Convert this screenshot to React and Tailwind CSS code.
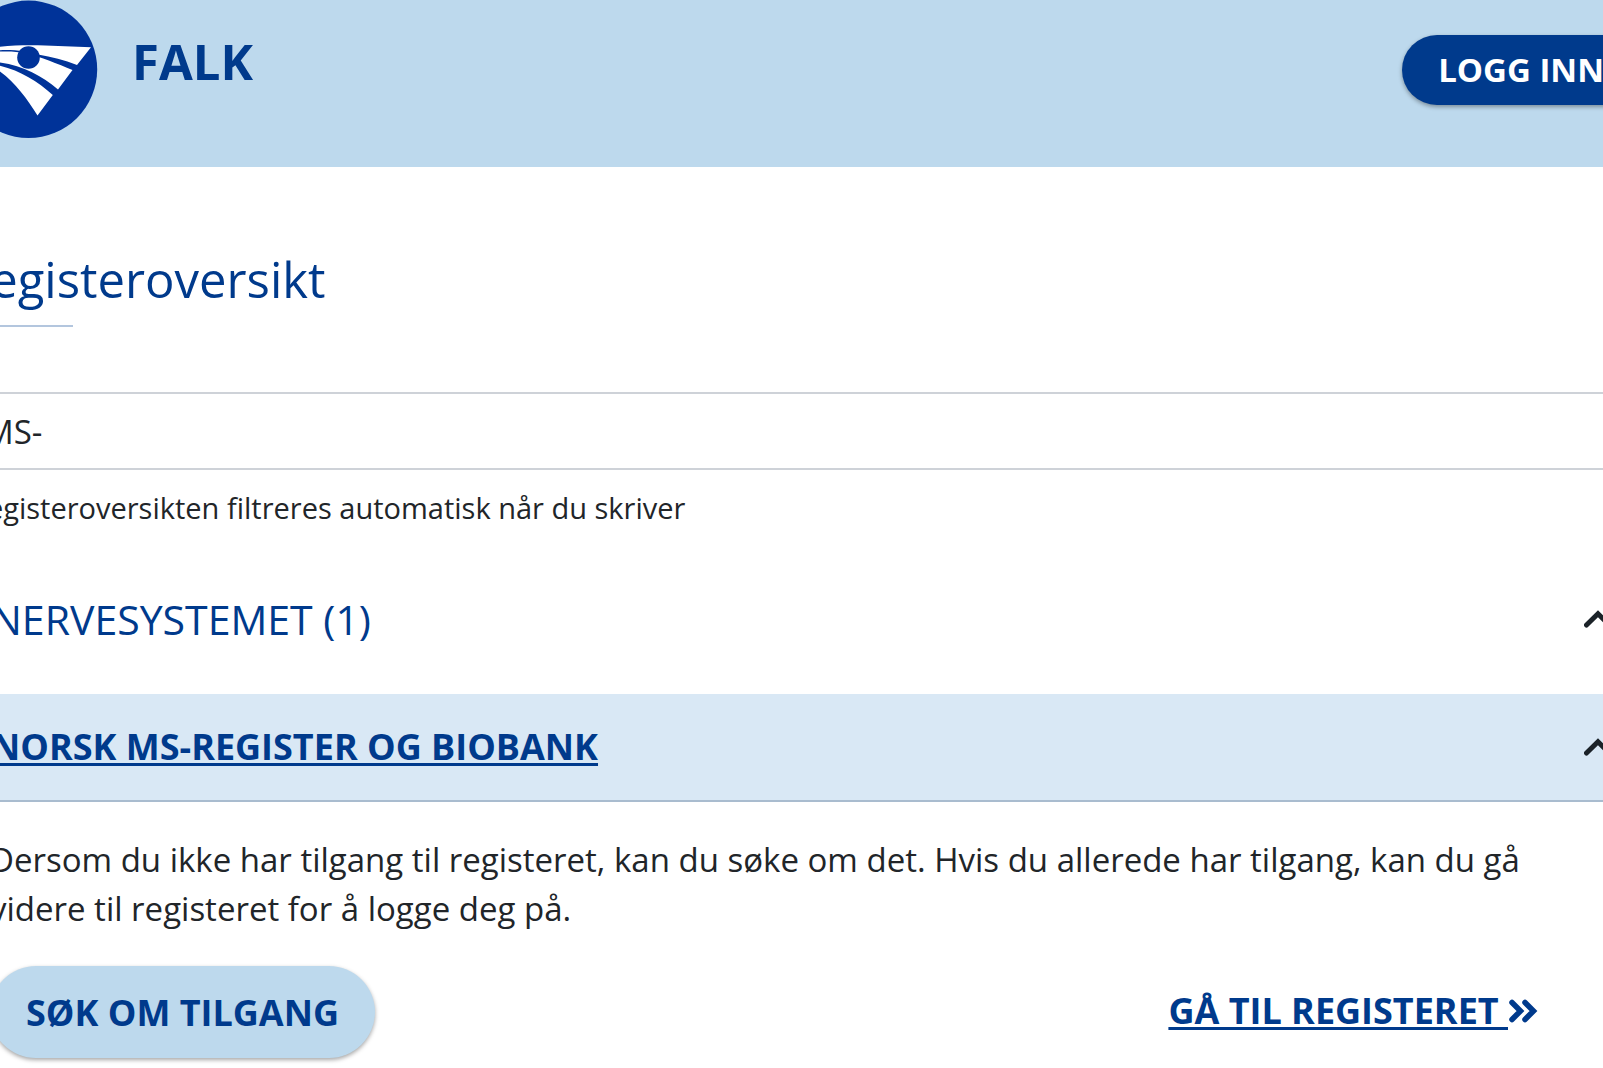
import React, { useState } from 'react'

// Round FALK mark: dark disc with a stylised falcon wing
function FalkLogo() {
  return (
    <svg viewBox="-40 0 138 138" className="size-[138px] shrink-0" aria-hidden="true">
      <circle cx="28.5" cy="69.3" r="68.7" fill="#003399" />
      <path d="M-34 54 C-10 46 18 44.5 45 45.5 L91 47.3 L77 65 C64 60 52 57 38 54.5 C22 49.5 0 48 -34 54 Z" fill="#fff" />
      <path d="M-34 57 C-10 50.5 12 50.5 24 53 C40 56.5 58 64 72.5 70 L58 89.5 C42 76 24 66 0 62.5 C-12 60.5 -22 60 -34 60 Z" fill="#fff" />
      <path d="M-28 62.5 C8 63 31 76 52.8 95 L37.5 115.5 C27 99 16 83 0 71.5 C-9 66 -18 63.5 -28 62.5 Z" fill="#fff" />
      <circle cx="28.5" cy="57.5" r="11.3" fill="#003399" />
    </svg>
  )
}

function ChevronUp() {
  return (
    <svg viewBox="0 0 28 18" className="h-[18px] w-7 shrink-0" fill="none" aria-hidden="true">
      <path d="M2.5 15 L14 3.8 L25.5 15" stroke="#1b2228" strokeWidth="5" strokeLinecap="round" strokeLinejoin="miter" />
    </svg>
  )
}

function DoubleChevronRight() {
  return (
    <svg viewBox="0 0 30 24" className="h-6 w-[30px] shrink-0" fill="none" aria-hidden="true">
      <path d="M4 3.5 L12.5 12 L4 20.5 M17 3.5 L25.5 12 L17 20.5" stroke="#003a8c" strokeWidth="5.5" strokeLinecap="round" strokeLinejoin="miter" />
    </svg>
  )
}

const REGISTERS = [{ id: 'ms', name: 'NORSK MS-REGISTER OG BIOBANK' }]

function RegisterItem({ register }) {
  const [open, setOpen] = useState(true)

  return (
    <section>
      <h3>
        <button
          type="button"
          aria-expanded={open}
          onClick={() => setOpen(!open)}
          className="flex h-[108px] w-full items-center justify-between border-b-2 border-[#a9bccf] bg-[#d9e8f5] px-px text-left text-4xl font-bold text-[#003a8c]"
        >
          <span className="underline decoration-[3px] underline-offset-3">{register.name}</span>
          <ChevronUp />
        </button>
      </h3>
      {open && (
        <div className="pt-[33px]">
          <p className="pr-16 text-[33px] leading-[49px] text-[#212529]">
            Dersom du ikke har tilgang til registeret, kan du søke om det. Hvis du allerede har tilgang, kan du gå
            videre til registeret for å logge deg på.
          </p>
          <div className="mt-[33px] flex items-center justify-between pr-[75px]">
            <button
              type="button"
              className="h-[92px] rounded-full bg-[#bdd9ed] px-9 pt-0.5 text-4xl font-bold text-[#003a8c] shadow-[0_2px_4px_rgba(0,0,0,0.35)]"
            >
              SØK OM TILGANG
            </button>
            <a href="#register" className="flex items-center pb-0.5 text-4xl font-bold text-[#003a8c]">
              <span className="whitespace-pre underline decoration-[3px] underline-offset-3">{'GÅ TIL REGISTERET '}</span>
              <DoubleChevronRight />
            </a>
          </div>
        </div>
      )}
    </section>
  )
}

function App() {
  const [query, setQuery] = useState('MS-')
  const [groupOpen, setGroupOpen] = useState(true)

  return (
    <div className="min-h-screen overflow-hidden bg-white font-['Open_Sans',sans-serif]">
      <header className="-mx-10 flex h-[167px] items-start justify-between bg-[#bdd9ed] pr-[3px]">
        <div className="flex items-start gap-[34px]">
          <FalkLogo />
          <span className="pt-[26px] text-[49px] leading-[70px] font-bold text-[#003a8c]">FALK</span>
        </div>
        <button
          type="button"
          className="mt-[35px] h-[70px] rounded-full bg-[#003a8c] px-9 text-[33px] font-bold text-white shadow-[0_2px_4px_rgba(0,0,0,0.35)]"
        >
          LOGG INN
        </button>
      </header>

      <main className="-mx-10">
        <h1 className="pt-[76px] text-[49px] leading-[72px] text-[#003a8c]">Registeroversikt</h1>
        <div className="mt-[10px] h-0.5 w-[113px] bg-[#b3c6de]" />

        <div className="pt-[65px]">
          <input
            id="register-filter"
            type="text"
            aria-label="Søk i registeroversikten"
            aria-describedby="filter-help"
            value={query}
            onChange={e => setQuery(e.target.value)}
            className="block h-[78px] w-full border-2 border-[#ced2d8] px-[22px] text-[33px] text-[#212529] outline-none"
          />
          <p id="filter-help" className="px-[9px] pt-[18px] text-[29px] leading-10 text-[#212529]">
            Registeroversikten filtreres automatisk når du skriver
          </p>
        </div>

        <div className="px-[30px] pt-[61px]">
          <h2>
            <button
              type="button"
              aria-expanded={groupOpen}
              onClick={() => setGroupOpen(!groupOpen)}
              className="flex h-[105px] w-full items-start justify-between px-px text-left text-[41px] leading-[60px] text-[#003a8c]"
            >
              <span>NERVESYSTEMET (1)</span>
              <span className="flex h-[60px] items-center"><ChevronUp /></span>
            </button>
          </h2>
          {groupOpen && REGISTERS.map(r => <RegisterItem key={r.id} register={r} />)}
        </div>
      </main>
    </div>
  )
}

export default App
